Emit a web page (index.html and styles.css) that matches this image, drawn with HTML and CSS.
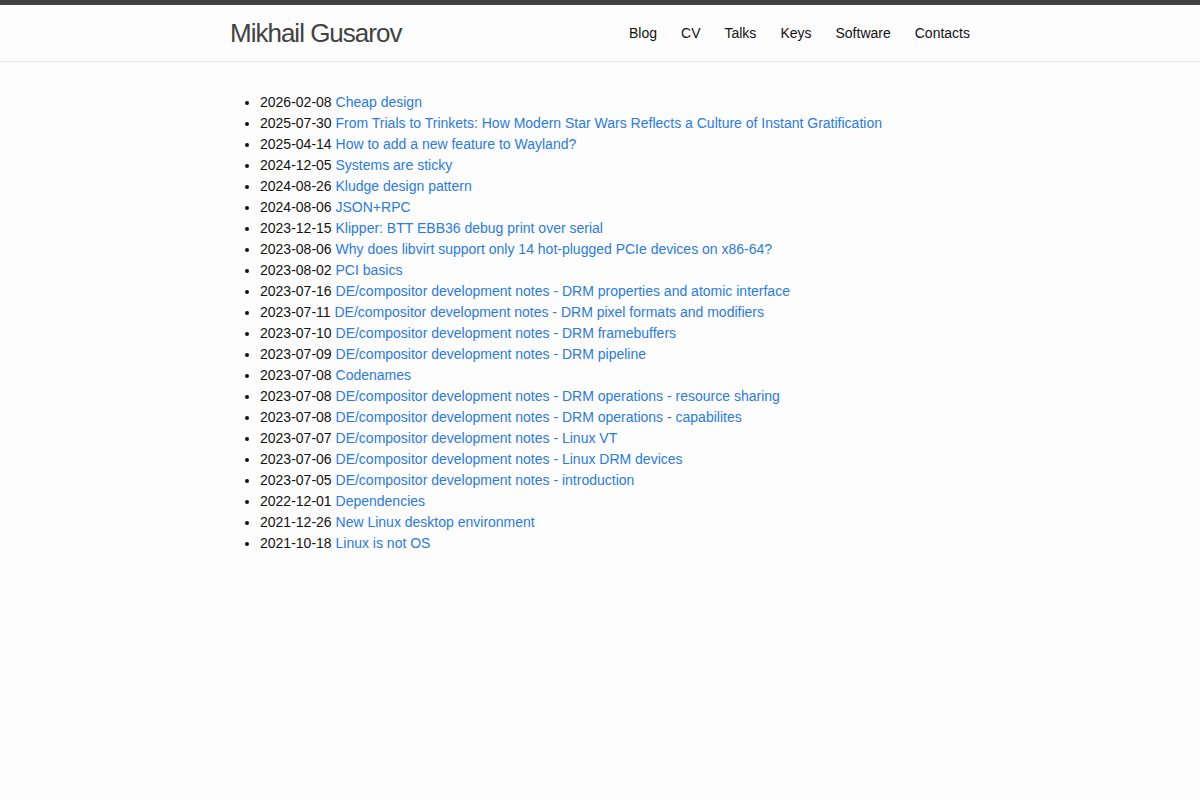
FILE: index.html
```html
<!DOCTYPE html>
<html lang="en">
<head>
<meta charset="utf-8">
<title>Mikhail Gusarov</title>
<link rel="stylesheet" href="styles.css">
</head>
<body>
<header class="site-header">
  <div class="wrapper header-row">
    <a class="site-title" href="#">Mikhail Gusarov</a>
    <nav class="site-nav">
      <a class="page-link" href="#">Blog</a>
      <a class="page-link" href="#">CV</a>
      <a class="page-link" href="#">Talks</a>
      <a class="page-link" href="#">Keys</a>
      <a class="page-link" href="#">Software</a>
      <a class="page-link" href="#">Contacts</a>
    </nav>
  </div>
</header>
<main class="page-content">
  <div class="wrapper">
    <ul class="post-list">
      <li>2026-02-08 <a href="#">Cheap design</a></li>
      <li>2025-07-30 <a href="#">From Trials to Trinkets: How Modern Star Wars Reflects a Culture of Instant Gratification</a></li>
      <li>2025-04-14 <a href="#">How to add a new feature to Wayland?</a></li>
      <li>2024-12-05 <a href="#">Systems are sticky</a></li>
      <li>2024-08-26 <a href="#">Kludge design pattern</a></li>
      <li>2024-08-06 <a href="#">JSON+RPC</a></li>
      <li>2023-12-15 <a href="#">Klipper: BTT EBB36 debug print over serial</a></li>
      <li>2023-08-06 <a href="#">Why does libvirt support only 14 hot-plugged PCIe devices on x86-64?</a></li>
      <li>2023-08-02 <a href="#">PCI basics</a></li>
      <li>2023-07-16 <a href="#">DE/compositor development notes - DRM properties and atomic interface</a></li>
      <li>2023-07-11 <a href="#">DE/compositor development notes - DRM pixel formats and modifiers</a></li>
      <li>2023-07-10 <a href="#">DE/compositor development notes - DRM framebuffers</a></li>
      <li>2023-07-09 <a href="#">DE/compositor development notes - DRM pipeline</a></li>
      <li>2023-07-08 <a href="#">Codenames</a></li>
      <li>2023-07-08 <a href="#">DE/compositor development notes - DRM operations - resource sharing</a></li>
      <li>2023-07-08 <a href="#">DE/compositor development notes - DRM operations - capabilites</a></li>
      <li>2023-07-07 <a href="#">DE/compositor development notes - Linux VT</a></li>
      <li>2023-07-06 <a href="#">DE/compositor development notes - Linux DRM devices</a></li>
      <li>2023-07-05 <a href="#">DE/compositor development notes - introduction</a></li>
      <li>2022-12-01 <a href="#">Dependencies</a></li>
      <li>2021-12-26 <a href="#">New Linux desktop environment</a></li>
      <li>2021-10-18 <a href="#">Linux is not OS</a></li>
    </ul>
  </div>
</main>
</body>
</html>
```

FILE: styles.css
```css
html, body {
  margin: 0;
  padding: 0;
}
body {
  font-family: "Liberation Sans", Arial, Helvetica, sans-serif;
  font-size: 14px;
  line-height: 1.5;
  color: #111;
  background: #fdfdfd;
}
a {
  color: #2a7ae2;
  text-decoration: none;
}
.wrapper {
  max-width: 740px;
  margin: 0 auto;
  padding: 0 30px;
}
.site-header {
  border-top: 5px solid #424242;
  border-bottom: 1px solid #e8e8e8;
  min-height: 56px;
}
.header-row {
  display: flex;
  justify-content: space-between;
  align-items: center;
  height: 56px;
}
.site-title {
  font-size: 26px;
  font-weight: 300;
  line-height: 56px;
  letter-spacing: -1px;
  color: #424242;
}
.site-nav {
  display: flex;
  gap: 24px;
  line-height: 56px;
}
.page-link {
  color: #111;
  line-height: 1.5;
}
.page-content {
  padding: 30px 0;
}
.post-list {
  margin: 0 0 0 30px;
  padding: 0;
}
```
